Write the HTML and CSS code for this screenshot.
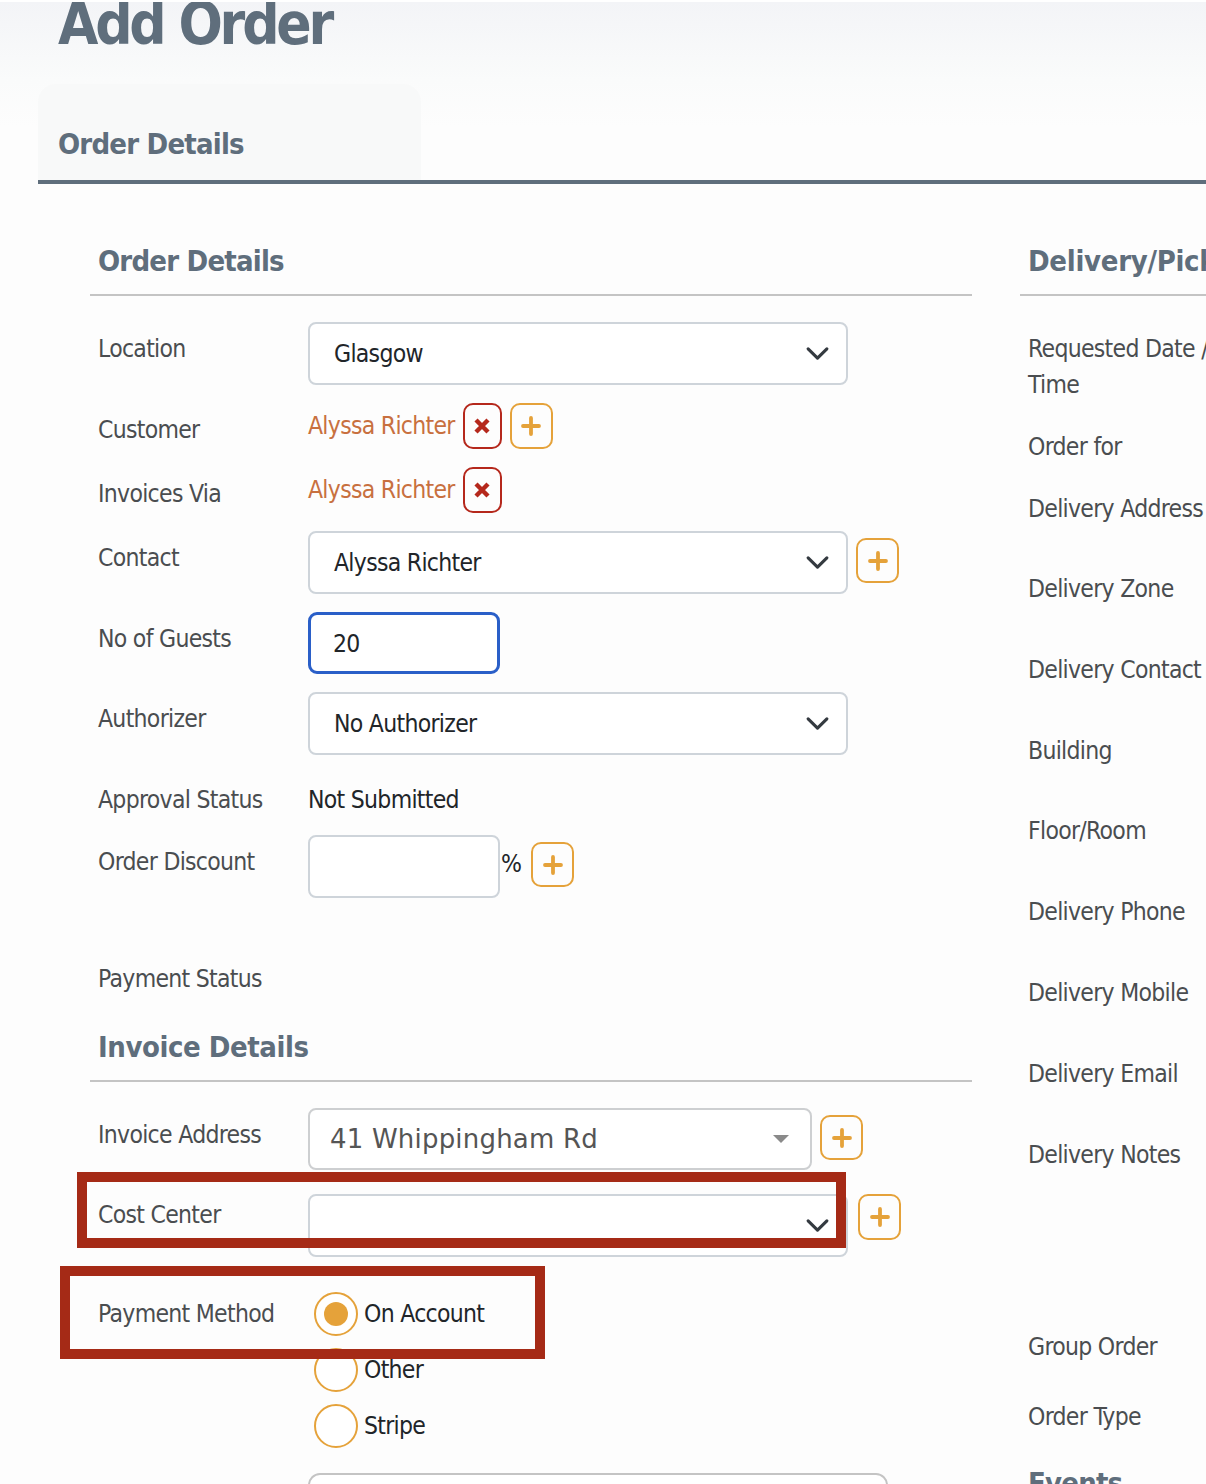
FILE: index.html
```html
<!DOCTYPE html>
<html lang="en">
<head>
<meta charset="utf-8">
<title>Add Order</title>
<link rel="stylesheet" href="styles.css">
</head>
<body>
<div class="page">
  <header class="title-bar"><h1 class="title">Add Order</h1></header>
  <nav class="tabs"><div class="tab">Order Details</div></nav>
  <main class="columns">
    <section class="col-left">
      <h2 class="section-head">Order Details</h2>
      <div class="rows">
        <div class="row"><label class="lbl">Location</label>
          <div class="select w-540"><span>Glasgow</span><svg class="chev" viewBox="0 0 16 16"><path d="M2 5l6 6 6-6"/></svg></div></div>
        <div class="row row-mid"><label class="lbl">Customer</label>
          <a class="link">Alyssa Richter</a>
          <button class="btn btn-x"><svg viewBox="0 0 20 20"><path d="M4 4l12 12M16 4l-12 12"/></svg></button>
          <button class="btn btn-plus"><svg viewBox="0 0 20 20"><path d="M10 2v16M2 10h16"/></svg></button></div>
        <div class="row row-mid"><label class="lbl">Invoices Via</label>
          <a class="link">Alyssa Richter</a>
          <button class="btn btn-x"><svg viewBox="0 0 20 20"><path d="M4 4l12 12M16 4l-12 12"/></svg></button></div>
        <div class="row"><label class="lbl">Contact</label>
          <div class="select w-540"><span>Alyssa Richter</span><svg class="chev" viewBox="0 0 16 16"><path d="M2 5l6 6 6-6"/></svg></div>
          <button class="btn btn-plus btn-low"><svg viewBox="0 0 20 20"><path d="M10 2v16M2 10h16"/></svg></button></div>
        <div class="row"><label class="lbl">No of Guests</label>
          <input class="input input-focus" type="text" value="20"></div>
        <div class="row"><label class="lbl">Authorizer</label>
          <div class="select w-540"><span>No Authorizer</span><svg class="chev" viewBox="0 0 16 16"><path d="M2 5l6 6 6-6"/></svg></div></div>
        <div class="row row-text"><label class="lbl">Approval Status</label><span class="value">Not Submitted</span></div>
        <div class="row"><label class="lbl">Order Discount</label>
          <input class="input" type="text" value=""><span class="pct">%</span>
          <button class="btn btn-plus btn-low"><svg viewBox="0 0 20 20"><path d="M10 2v16M2 10h16"/></svg></button></div>
        <div class="row row-status"><label class="lbl">Payment Status</label></div>
      </div>
      <h2 class="section-head section-head-2">Invoice Details</h2>
      <div class="rows">
        <div class="row"><label class="lbl">Invoice Address</label>
          <div class="select select-address"><span>41 Whippingham Rd</span><i class="caret"></i></div>
          <button class="btn btn-plus btn-low"><svg viewBox="0 0 20 20"><path d="M10 2v16M2 10h16"/></svg></button></div>
        <div class="row row-cost"><label class="lbl lbl-tight">Cost Center</label>
          <div class="select w-540"><svg class="chev" viewBox="0 0 16 16"><path d="M2 5l6 6 6-6"/></svg></div>
          <button class="btn btn-plus gap-left-md"><svg viewBox="0 0 20 20"><path d="M10 2v16M2 10h16"/></svg></button></div>
        <div class="row"><label class="lbl lbl-pay">Payment Method</label>
          <div class="radios">
            <div class="radio-item"><span class="radio radio-on"></span><span class="radio-text">On Account</span></div>
            <div class="radio-item"><span class="radio"></span><span class="radio-text">Other</span></div>
            <div class="radio-item"><span class="radio"></span><span class="radio-text">Stripe</span></div>
          </div></div>
        <div class="row"><div class="spacer"></div><div class="textarea"></div></div>
      </div>
      <div class="mark mark-cost"></div>
      <div class="mark mark-pay"></div>
    </section>
    <section class="col-right">
      <h2 class="section-head head-clip">Delivery/Pickup Details</h2>
      <div class="rows">
        <div class="rlabel rl-80">Requested Date / Time</div>
        <div class="rlabel rl-44">Order for</div>
        <div class="rlabel rl-62">Delivery Address</div>
        <div class="rlabel rl-63">Delivery Zone</div>
        <div class="rlabel rl-63">Delivery Contact</div>
        <div class="rlabel rl-62">Building</div>
        <div class="rlabel rl-63">Floor/Room</div>
        <div class="rlabel rl-63">Delivery Phone</div>
        <div class="rlabel rl-63">Delivery Mobile</div>
        <div class="rlabel rl-63">Delivery Email</div>
        <div class="rlabel rl-174">Delivery Notes</div>
        <div class="rlabel rl-52">Group Order</div>
        <div class="rlabel rl-52">Order Type</div>
        <h2 class="events">Events</h2>
      </div>
    </section>
  </main>
</div>
</body>
</html>
```
FILE: styles.css
```css
* { box-sizing: border-box; }
html, body { margin: 0; height: 1484px; overflow: hidden; background: #fff; }
body { padding-top: 2px; font-family: "DejaVu Sans Condensed", "DejaVu Sans", sans-serif; font-stretch: condensed; font-size: 24.5px; letter-spacing: -0.7px; color: #212529; }
.page { height: 1482px; overflow: hidden; background: linear-gradient(#f3f4f7 0, #fafbfb 78px, #fdfdfd 125px); }
.title-bar { height: 82px; padding-left: 58px; overflow: hidden; }
.title { margin: -13px 0 0; font-size: 58px; line-height: 70px; font-weight: 700; letter-spacing: -3.2px; color: #5f6e7c; }
.tabs { margin: 0 0 46px 38px; border-bottom: 4px solid #5f6e7c; }
.tab { width: 383px; height: 96px; padding: 41px 20px 0; background: #f8f9f9; border-radius: 18px 18px 0 0; font-size: 29px; line-height: 38px; font-weight: 700; letter-spacing: -0.8px; color: #5f6e7c; }
.columns { display: flex; gap: 48px; width: 1600px; padding-left: 90px; }
.col-left { position: relative; width: 882px; flex: none; }
.col-right { width: 500px; flex: none; }
.section-head { height: 66px; margin: 0; padding: 12px 0 0 8px; border-bottom: 2px solid #c4c4c4; font-size: 29px; line-height: 38px; font-weight: 700; letter-spacing: -0.8px; color: #5f6e7c; }
.section-head-2 { height: 86px; padding-top: 32px; letter-spacing: -0.45px; }
.rows { display: flex; flex-direction: column; gap: 18px; padding-top: 26px; }
.row { display: flex; align-items: flex-start; padding-left: 8px; }
.row-mid { align-items: center; }
.row-text { height: 44px; }
.row-status { height: 44px; margin-top: 36px; }
.row-cost { margin-top: 6px; }
.lbl { width: 210px; flex: none; align-self: flex-start; padding-top: 9px; line-height: 36px; color: #4a4d50; }
.lbl-tight { padding-top: 3px; }
.lbl-pay { padding-top: 21px; }
.select { display: flex; align-items: center; height: 63px; padding: 0 16px 0 24px; background: #fff; border: 2px solid #ced4da; border-radius: 8px; line-height: 36px; }
.w-540 { width: 540px; flex: none; }
.select-address { width: 504px; flex: none; height: 62px; padding: 0 21px 0 20px; border-color: #cdcfd1; font-family: "DejaVu Sans", sans-serif; font-stretch: normal; font-size: 26px; letter-spacing: 0.2px; color: #555; }
.caret { width: 0; height: 0; margin-left: auto; border-left: 8px solid transparent; border-right: 8px solid transparent; border-top: 8px solid #8a8a8a; }
.chev { width: 25px; height: 25px; margin-left: auto; fill: none; stroke: #343a40; stroke-width: 2; stroke-linecap: round; stroke-linejoin: round; }
.input { width: 192px; height: 63px; padding: 0 22px; background: #fff; border: 2px solid #ced4da; border-radius: 8px; font: inherit; font-stretch: condensed; letter-spacing: inherit; color: #212529; outline: none; }
.input-focus { height: 62px; border: 3px solid #2a5fc8; border-radius: 9px; }
.link { color: #c8703f; line-height: 36px; }
.value { padding-top: 9px; line-height: 36px; }
.pct { width: 22px; margin-left: 1px; padding-top: 11px; line-height: 36px; }
.btn { display: inline-flex; align-items: center; justify-content: center; height: 46px; padding: 0; background: transparent; border: 2px solid; border-radius: 10px; }
.btn svg { width: 20px; height: 20px; fill: none; }
.btn-x { width: 39px; margin-left: 8px; border-color: #b5281c; }
.btn-x svg { stroke: #b5281c; stroke-width: 4.4; }
.btn-plus { width: 43px; margin-left: 8px; border-color: #e5a23a; }
.btn-plus svg { stroke: #e5a23a; stroke-width: 3.8; stroke-linecap: round; }
.btn-low { height: 45px; margin-top: 7px; }
.gap-left-md { margin-left: 10px; }
.radios { display: flex; flex-direction: column; padding: 11px 0 0 6px; }
.radio-item { display: flex; align-items: center; gap: 6px; height: 56px; }
.radio-text { margin-top: -2px; }
.radio { position: relative; display: block; width: 44px; height: 44px; background: #fff; border: 2px solid #e5a23a; border-radius: 50%; }
.radio-on::after { content: ""; position: absolute; inset: 8px; background: #e5a23a; border-radius: 50%; }
.spacer { width: 210px; flex: none; }
.textarea { width: 580px; height: 60px; margin-top: 1px; background: #fff; border: 2px solid #c4c4c4; border-radius: 12px; }
.mark { position: absolute; border: 10px solid #a52a16; pointer-events: none; }
.mark-cost { left: -13px; top: 942px; width: 769px; height: 76px; }
.mark-pay { left: -30px; top: 1036px; width: 485px; height: 93px; }
.head-clip { white-space: nowrap; letter-spacing: -0.3px; }
.rlabel { width: 178px; margin-left: 8px; padding-top: 9px; line-height: 36px; color: #4a4d50; white-space: nowrap; }
.rl-44 { height: 44px; }
.rl-52 { height: 52px; }
.rl-62 { height: 62px; }
.rl-63 { height: 63px; }
.rl-80 { width: 190px; height: 80px; white-space: normal; }
.rl-174 { height: 174px; }
.events { margin: 4px 0 0 8px; font-size: 29px; line-height: 38px; font-weight: 700; letter-spacing: -0.8px; color: #5f6e7c; }
```
